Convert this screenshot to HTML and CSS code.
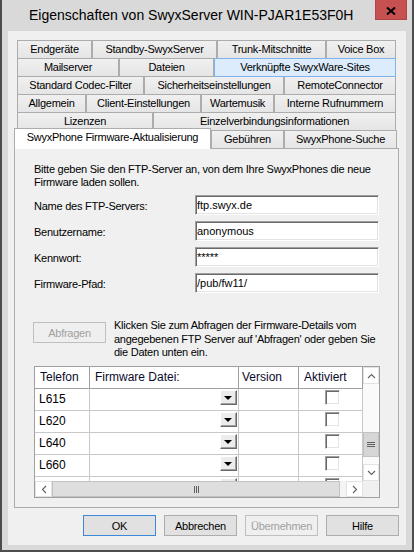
FILE: index.html
```html
<!DOCTYPE html>
<html lang="de">
<head>
<meta charset="UTF-8" />
<title>Eigenschaften von SwyxServer</title>
<link rel="stylesheet" href="styles.css">
</head>
<body>
<div class="window">
  <div class="titlebar">
    <div class="title">Eigenschaften von SwyxServer WIN-PJAR1E53F0H</div>
    <div class="close">
      <svg width="10" height="8" viewBox="0 0 10 8"><path d="M1 0.5 L9 7.5 M9 0.5 L1 7.5" stroke="#000" stroke-width="2"/></svg>
    </div>
  </div>

  <div class="client">
    <div class="tabs">
      <div class="tabrow r1">
        <div class="tab">Endgeräte</div><div class="tab">Standby-SwyxServer</div><div class="tab">Trunk-Mitschnitte</div><div class="tab">Voice Box</div>
      </div>
      <div class="tabrow r2">
        <div class="tab">Mailserver</div><div class="tab">Dateien</div><div class="tab hot">Verknüpfte SwyxWare-Sites</div>
      </div>
      <div class="tabrow r3">
        <div class="tab">Standard Codec-Filter</div><div class="tab">Sicherheitseinstellungen</div><div class="tab">RemoteConnector</div>
      </div>
      <div class="tabrow r4">
        <div class="tab">Allgemein</div><div class="tab">Client-Einstellungen</div><div class="tab">Wartemusik</div><div class="tab">Interne Rufnummern</div>
      </div>
      <div class="tabrow r5">
        <div class="tab">Lizenzen</div><div class="tab">Einzelverbindungsinformationen</div>
      </div>
      <div class="tabrow r6">
        <div class="tab sel">SwyxPhone Firmware-Aktualisierung</div><div class="tab">Gebühren</div><div class="tab">SwyxPhone-Suche</div>
      </div>
    </div>

    <div class="page">
      <p class="intro">Bitte geben Sie den FTP-Server an, von dem Ihre SwyxPhones die neue<br>Firmware laden sollen.</p>

      <div class="fields">
        <label>Name des FTP-Servers:</label><input type="text" value="ftp.swyx.de">
        <label>Benutzername:</label><input type="text" value="anonymous">
        <label>Kennwort:</label><input type="text" value="*****">
        <label>Firmware-Pfad:</label><input type="text" value="/pub/fw11/">
      </div>

      <div class="query">
        <button class="btn query-btn" disabled>Abfragen</button>
        <p>Klicken Sie zum Abfragen der Firmware-Details vom<br>angegebenen FTP Server auf 'Abfragen' oder geben Sie<br>die Daten unten ein.</p>
      </div>

      <div class="gridbox">
        <div class="view">
          <div class="grow hdr">
            <div class="cell">Telefon</div><div class="cell">Firmware Datei:</div><div class="cell ver">Version</div><div class="cell">Aktiviert</div>
          </div>
          <div class="grow">
            <div class="cell">L615</div><div class="cell combo"><span class="drop"></span></div><div class="cell"></div><div class="cell check"><span class="box"></span></div>
          </div>
          <div class="grow">
            <div class="cell">L620</div><div class="cell combo"><span class="drop"></span></div><div class="cell"></div><div class="cell check"><span class="box"></span></div>
          </div>
          <div class="grow">
            <div class="cell">L640</div><div class="cell combo"><span class="drop"></span></div><div class="cell"></div><div class="cell check"><span class="box"></span></div>
          </div>
          <div class="grow">
            <div class="cell">L660</div><div class="cell combo"><span class="drop"></span></div><div class="cell"></div><div class="cell check"><span class="box"></span></div>
          </div>
          <!-- next row, scrolled mostly out of view -->
          <div class="grow">
            <div class="cell"></div><div class="cell combo"><span class="drop"></span></div><div class="cell"></div><div class="cell check"><span class="box"></span></div>
          </div>
        </div>

        <!-- vertical scrollbar -->
        <div class="vbar">
          <div class="arrow"><svg width="9" height="6" viewBox="0 0 9 6"><polyline points="1,5 4.5,1.5 8,5" fill="none" stroke="#606060" stroke-width="1.1"/></svg></div>
          <div class="vgap"></div>
          <div class="thumb vthumb"><svg width="8" height="7" viewBox="0 0 8 7"><path d="M0 1.5H8M0 3.5H8M0 5.5H8" stroke="#606060" stroke-width="1"/></svg></div>
          <div class="fill"></div>
          <div class="arrow"><svg width="9" height="6" viewBox="0 0 9 6"><polyline points="1,1 4.5,4.5 8,1" fill="none" stroke="#606060" stroke-width="1.1"/></svg></div>
        </div>

        <!-- horizontal scrollbar -->
        <div class="hbar">
          <div class="arrow"><svg width="6" height="9" viewBox="0 0 6 9"><polyline points="5,1 1.5,4.5 5,8" fill="none" stroke="#606060" stroke-width="1.1"/></svg></div>
          <div class="thumb hthumb"><svg width="7" height="7" viewBox="0 0 7 7"><path d="M1.5 0V7M3.5 0V7M5.5 0V7" stroke="#606060" stroke-width="1"/></svg></div>
          <div class="fill"></div>
          <div class="arrow"><svg width="6" height="9" viewBox="0 0 6 9"><polyline points="1,1 4.5,4.5 1,8" fill="none" stroke="#606060" stroke-width="1.1"/></svg></div>
        </div>
        <div class="corner"></div>
      </div>
    </div>

    <div class="actions">
      <button class="btn default">OK</button>
      <button class="btn">Abbrechen</button>
      <button class="btn" disabled>Übernehmen</button>
      <button class="btn">Hilfe</button>
    </div>
  </div>
</div>
</body>
</html>
```

FILE: styles.css
```css
body {
  margin: 0;
  font-family: "Liberation Sans", Arial, sans-serif;
  font-size: 11px;
  letter-spacing: -0.25px;
  color: #000;
  background: #fff;
}

.window {
  width: 414px;
  height: 552px;
  box-sizing: border-box;
  display: flex;
  flex-direction: column;
  background: #d9d9d9;
  border: 2px solid #4d4d4d;
  border-top: 0;
}

/* Title bar */
.titlebar {
  height: 31px;
  flex: none;
  display: flex;
  align-items: flex-start;
  padding-left: 27px;
}
.title {
  font-size: 14px;
  letter-spacing: 0;
  line-height: 31px;
  white-space: nowrap;
}
.close {
  margin-left: auto;
  margin-right: 5px;
  width: 32px;
  height: 20px;
  box-sizing: border-box;
  background: #c75050;
  border: 1px solid #b04545;
  border-top: 0;
  display: flex;
  justify-content: center;
  padding-top: 7px;
}

.client {
  flex: 1;
  margin: 0 6px 5px;
  padding: 9px 7px 0 6px;
  background: #f0f0f0;
  display: flex;
  flex-direction: column;
}

/* Tabs, several rows */
.tabs { padding: 0 3px; }
.tabrow { display: grid; }
.tabrow + .tabrow { margin-top: -1px; }
.tab {
  box-sizing: border-box;
  height: 19px;
  border: 1px solid #acacac;
  background: linear-gradient(#f0f0f0, #e5e5e5);
  text-align: center;
  line-height: 17px;
  white-space: nowrap;
  overflow: hidden;
}
.tab.hot {
  position: relative;
  z-index: 1;
  background: #dcecfc;
  border-color: #7eb4ea;
}
.r1 { grid-template-columns: 75px 125px 109px 70px; }
.r2 { grid-template-columns: 102px 95px 182px; }
.r3 { grid-template-columns: 127px 140px 112px; }
.r4 { grid-template-columns: 69px 115px 73px 122px; }
.r5 { grid-template-columns: 136px 243px; }
.tabrow.r6 {
  grid-template-columns: 197px 73px 113px;
  margin: -3px 0 0 -3px;
  height: 20px;
  align-items: start;
}
.r6 .tab {
  margin-top: 2px;
  height: 18px;
  border-bottom: 0;
}
.r6 .tab.sel {
  position: relative;
  z-index: 1;
  margin-top: 0;
  height: 21px;
  background: #fff;
}

/* Tab page */
.page {
  box-sizing: border-box;
  height: 360px;
  flex: none;
  border: 1px solid #acacac;
  background: #f0f0f0;
  padding: 14px 0 0 19px;
}
.intro {
  margin: 0;
  line-height: 13px;
  white-space: nowrap;
}

.fields {
  display: grid;
  grid-template-columns: 161px 184px;
  grid-auto-rows: 20px;
  row-gap: 6px;
  margin-top: 6px;
}
.fields label {
  padding-top: 3px;
  line-height: 17px;
}
.fields input {
  box-sizing: border-box;
  width: 184px;
  height: 20px;
  margin: 0;
  padding: 0 1px;
  font: inherit;
  color: #000;
  background: #fff;
  border: 1px solid;
  border-color: #a0a0a0 #fff #fff #a0a0a0;
  box-shadow: inset 1px 1px 0 #696969, inset -1px -1px 0 #e3e3e3;
  outline: none;
}

.query {
  display: flex;
  gap: 8px;
  height: 41px;
  margin-top: 26px;
}
.query p {
  margin: 0;
  line-height: 13.5px;
  white-space: nowrap;
}
.query-btn {
  width: 74px;
  height: 22px;
  margin: 3px 0 0 -1px;
  flex: none;
}

/* Data grid */
.gridbox {
  box-sizing: border-box;
  width: 346px;
  height: 132px;
  margin-top: 6px;
  border: 1px solid #a0a0a0;
  background: #fff;
  display: grid;
  grid-template-columns: 328px 16px;
  grid-template-rows: 114px 16px;
}
.view { overflow: hidden; }
.grow {
  display: grid;
  grid-template-columns: 55px 149px 60px 64px;
  height: 22px;
}
.cell {
  box-sizing: border-box;
  border-right: 1px solid #c8c8c8;
  border-bottom: 1px solid #c8c8c8;
  font-size: 12px;
  letter-spacing: 0;
  line-height: 21px;
  padding-left: 4px;
  white-space: nowrap;
  overflow: hidden;
}
.hdr .cell {
  border-color: #a0a0a0;
  padding-left: 5px;
  color: #0a0a2a;
}
.hdr .cell.ver { padding-left: 3px; }
.combo {
  display: flex;
  justify-content: flex-end;
  align-items: flex-start;
  padding: 1px 1px 0 0;
}
.drop {
  box-sizing: border-box;
  width: 17px;
  height: 15px;
  background: #ececec;
  border: 1px solid;
  border-color: #fff #696969 #696969 #fff;
  box-shadow: inset -1px -1px 0 #a0a0a0;
  display: flex;
  justify-content: center;
  align-items: center;
}
.drop::after {
  content: "";
  border-top: 4px solid #000;
  border-left: 4px solid transparent;
  border-right: 4px solid transparent;
  margin: 0 1px 0 0;
}
.check { padding: 1px 0 0 26px; }
.box {
  display: block;
  box-sizing: border-box;
  width: 15px;
  height: 15px;
  background: #fff;
  border: 1px solid;
  border-color: #a0a0a0 #fff #fff #a0a0a0;
  box-shadow: inset 1px 1px 0 #696969, inset -1px -1px 0 #e3e3e3;
}

/* Scrollbars */
.vbar {
  display: flex;
  flex-direction: column;
  background: #fafafa;
}
.hbar {
  display: flex;
  background: #f4f4f4;
}
.arrow {
  box-sizing: border-box;
  flex: none;
  width: 16px;
  height: 17px;
  background: #fff;
  border: 1px solid #e2e2e2;
  display: flex;
  justify-content: center;
  align-items: center;
}
.hbar .arrow { width: 17px; height: 16px; }
.vgap { height: 48px; flex: none; }
.fill { flex: 1; }
.thumb {
  box-sizing: border-box;
  flex: none;
  display: flex;
  justify-content: center;
  align-items: center;
  background: #d6d6d6;
  border: 1px solid #c2c2c2;
}
.vthumb { height: 25px; }
.hthumb { width: 288px; background: #dedede; }
.corner { background: #f0f0f0; }

/* Buttons */
.btn {
  box-sizing: border-box;
  width: 73px;
  height: 21px;
  padding: 0;
  font-family: "Liberation Sans", Arial, sans-serif;
  font-size: 11px;
  letter-spacing: -0.25px;
  color: #000;
  background: #e1e1e1;
  border: 1px solid #adadad;
}
.btn.default { border-color: #3c8ad6; }
.btn:disabled {
  color: #a0a0a0;
  background: #efefef;
  border-color: #bfbfbf;
}

.actions {
  display: flex;
  justify-content: flex-end;
  gap: 8px;
  margin-top: 7px;
}
```
